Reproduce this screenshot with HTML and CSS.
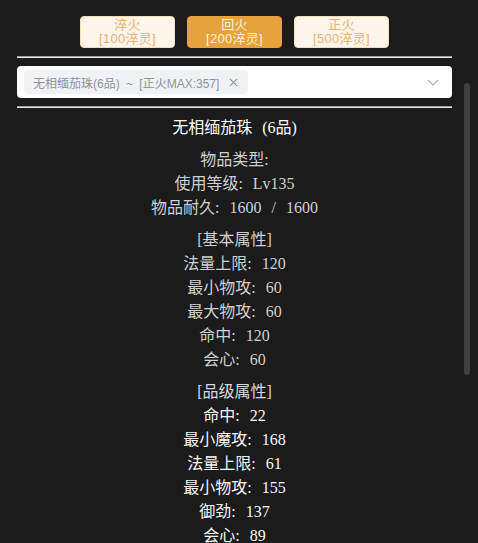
FILE: index.html
```html
<!DOCTYPE html>
<html lang="zh-CN">
<head>
<meta charset="utf-8">
<title>淬火</title>
<link rel="stylesheet" href="styles.css">
</head>
<body>
<div class="page">
  <div class="btn-row">
    <button class="btn">淬火<br>[100淬灵]</button>
    <button class="btn active">回火<br>[200淬灵]</button>
    <button class="btn">正火<br>[500淬灵]</button>
  </div>
  <div class="divider"></div>
  <div class="select">
    <div class="tag">
      <span class="tag-text">无相缅茄珠(6品) ~ [正火MAX:357]</span>
      <svg class="tag-close" viewBox="0 0 10 10" width="9" height="9"><path d="M1 1 L9 9 M9 1 L1 9" stroke="#909399" stroke-width="1.2" fill="none"/></svg>
    </div>
    <svg class="chevron" viewBox="0 0 12 7" width="12" height="7"><path d="M1 1 L6 6 L11 1" stroke="#a8abb2" stroke-width="1.2" fill="none"/></svg>
  </div>
  <div class="divider"></div>
  <div class="info">
    <div class="title">无相缅茄珠 (6品)</div>
    <div class="group dim">
      <div>物品类型:</div>
      <div>使用等级: Lv135</div>
      <div>物品耐久: 1600 / 1600</div>
    </div>
    <div class="group dim">
      <div>[基本属性]</div>
      <div>法量上限: 120</div>
      <div>最小物攻: 60</div>
      <div>最大物攻: 60</div>
      <div>命中: 120</div>
      <div>会心: 60</div>
    </div>
    <div class="group bright">
      <div class="head">[品级属性]</div>
      <div>命中: 22</div>
      <div>最小魔攻: 168</div>
      <div>法量上限: 61</div>
      <div>最小物攻: 155</div>
      <div>御劲: 137</div>
      <div>会心: 89</div>
    </div>
  </div>
</div>
<div class="scroll-thumb"></div>
</body>
</html>
```

FILE: styles.css
```css
html, body {
  margin: 0;
  padding: 0;
  background: #1b1b1b;
  height: 100%;
  overflow: hidden;
}

.page {
  width: 469px;
  box-sizing: border-box;
  padding: 16px 17px 0;
}

.btn-row {
  display: flex;
  justify-content: center;
  gap: 12px;
}

.btn {
  width: 95px;
  height: 32px;
  box-sizing: border-box;
  padding: 0;
  border: 1px solid #f6dcb6;
  border-radius: 4px;
  background: #fdf5ea;
  color: #efb074;
  font-family: "Liberation Sans", "Noto Sans CJK SC", sans-serif;
  font-size: 13px;
  line-height: 14px;
  letter-spacing: 0.3px;
  text-align: center;
}

.btn.active {
  background: #e6a23c;
  border-color: #e6a23c;
  color: #fdf1de;
}

.divider {
  margin: 8px 0;
  border-top: 1px solid #9c9c9c;
  border-bottom: 1px solid #e6e6e6;
}

.select {
  height: 32px;
  box-sizing: border-box;
  background: #ffffff;
  border-radius: 4px;
  display: flex;
  align-items: center;
  padding: 0 13px 0 7px;
}

.tag {
  height: 24px;
  box-sizing: border-box;
  background: #f0f2f5;
  border-radius: 4px;
  display: flex;
  align-items: center;
  gap: 10px;
  padding: 0 10px 0 9px;
  color: #909399;
  font-family: "Liberation Sans", "Noto Sans CJK SC", sans-serif;
  font-size: 12px;
  word-spacing: 3px;
}

.tag-close {
  display: block;
}

.chevron {
  margin-left: auto;
  display: block;
}

.info {
  text-align: center;
  font-family: "Liberation Serif", "Noto Sans CJK SC", serif;
  font-size: 16px;
  line-height: 24px;
  word-spacing: 6px;
}

.title {
  margin-top: 8px;
  color: #ffffff;
}

.group {
  margin-top: 8px;
}

.dim {
  color: #cfd0d2;
}

.bright {
  color: #f6f6f6;
}

.bright .head {
  color: #d6d8e0;
}

.scroll-thumb {
  position: absolute;
  left: 464px;
  top: 83px;
  width: 6px;
  height: 292px;
  border-radius: 3px;
  background: #3f3f3f;
}
```
